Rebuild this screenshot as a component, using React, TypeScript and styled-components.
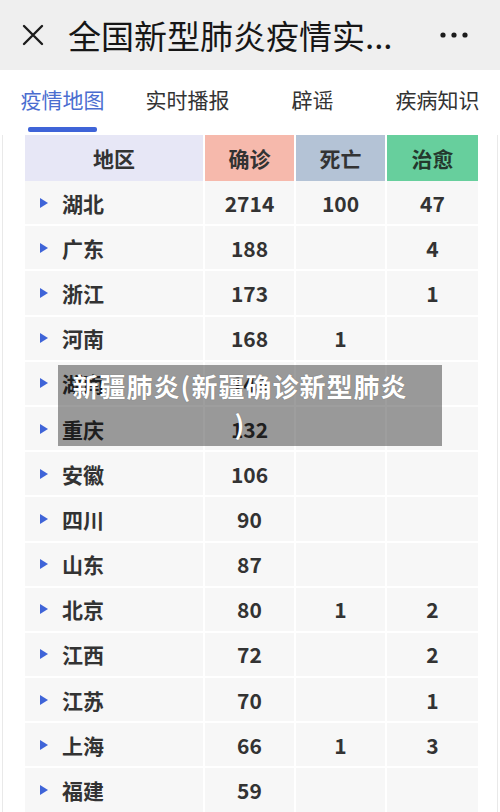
import React from 'react';
import styled, { createGlobalStyle } from 'styled-components';

const GlobalStyle = createGlobalStyle`
  html, body {
    margin: 0;
    padding: 0;
    background: #ffffff;
    font-family: "Noto Sans CJK SC", "Noto Sans", sans-serif;
  }
`;

const Page = styled.div`
  position: relative;
  width: 500px;
  height: 812px;
  overflow: hidden;
  background: #ffffff;
`;

const TopBar = styled.header`
  height: 70px;
  background: #efefef;
  display: flex;
  align-items: center;
  padding: 0 32px 0 22px;
  box-sizing: border-box;
`;

const Title = styled.h1`
  margin: 0 0 0 24px;
  font-size: 33px;
  font-weight: 400;
  color: #161616;
  line-height: 40px;
  white-space: nowrap;
`;

const More = styled.div`
  margin-left: auto;
  display: flex;
`;

const TabBar = styled.nav`
  height: 65px;
  display: grid;
  grid-template-columns: repeat(4, 1fr);
`;

const Tab = styled.div`
  display: flex;
  flex-direction: column;
  align-items: center;
`;

const TabLabel = styled.span<{ $active?: boolean }>`
  margin-top: 14px;
  font-size: 21px;
  line-height: 30px;
  color: ${(p) => (p.$active ? '#4a6dd0' : '#333333')};
  white-space: nowrap;
`;

const Underline = styled.span`
  margin-top: 13px;
  width: 69px;
  height: 5px;
  border-radius: 2px;
  background: #3f64d8;
`;

const Frame = styled.section`
  height: 677px;
  margin: 0 2px;
  border-left: 1px solid #e9e9e9;
  border-right: 1px solid #e9e9e9;
  padding-left: 22px;
`;

const HeadRow = styled.div`
  width: 453px;
  display: grid;
  grid-template-columns: 178px 89px 89px 91px;
  column-gap: 2px;
  height: 46px;
`;

const HeadCell = styled.div<{ $bg: string; $color?: string }>`
  background: ${(p) => p.$bg};
  color: ${(p) => p.$color || '#333333'};
  display: flex;
  align-items: center;
  justify-content: center;
  font-size: 21px;
  font-weight: 700;
`;

const Body = styled.div`
  width: 453px;
  display: grid;
  grid-template-columns: 178px 89px 89px 91px;
  grid-auto-rows: 43.2px;
  gap: 2px;
`;

const Cell = styled.div`
  background: #f7f7f7;
  display: flex;
  align-items: center;
  justify-content: center;
  font-size: 21px;
  font-weight: 700;
  color: #333333;
`;

const RegionCell = styled(Cell)`
  justify-content: flex-start;
  padding-left: 15px;
  gap: 14px;
`;

const Arrow = styled.span`
  width: 0;
  height: 0;
  border-top: 5px solid transparent;
  border-bottom: 5px solid transparent;
  border-left: 8px solid #3f64d8;
`;

const Overlay = styled.div`
  position: absolute;
  left: 58px;
  top: 365px;
  width: 384px;
  height: 81px;
  box-sizing: border-box;
  padding: 2px 30px 3px 10px;
  background: rgba(0, 0, 0, 0.38);
  color: #ffffff;
  font-size: 26px;
  font-weight: 700;
  letter-spacing: 1px;
  line-height: 38px;
  text-align: center;
  white-space: nowrap;
  text-shadow: 0 0 1px rgba(0, 0, 0, 0.4);
`;

type Row = { name: string; confirmed: string; dead: string; cured: string };

const rows: Row[] = [
  { name: '湖北', confirmed: '2714', dead: '100', cured: '47' },
  { name: '广东', confirmed: '188', dead: '', cured: '4' },
  { name: '浙江', confirmed: '173', dead: '', cured: '1' },
  { name: '河南', confirmed: '168', dead: '1', cured: '' },
  { name: '湖南', confirmed: '143', dead: '', cured: '' },
  { name: '重庆', confirmed: '132', dead: '', cured: '' },
  { name: '安徽', confirmed: '106', dead: '', cured: '' },
  { name: '四川', confirmed: '90', dead: '', cured: '' },
  { name: '山东', confirmed: '87', dead: '', cured: '' },
  { name: '北京', confirmed: '80', dead: '1', cured: '2' },
  { name: '江西', confirmed: '72', dead: '', cured: '2' },
  { name: '江苏', confirmed: '70', dead: '', cured: '1' },
  { name: '上海', confirmed: '66', dead: '1', cured: '3' },
  { name: '福建', confirmed: '59', dead: '', cured: '' },
];

const tabs = ['疫情地图', '实时播报', '辟谣', '疾病知识'];

const App: React.FC = () => {
  return (
    <Page>
      <GlobalStyle />
      <TopBar>
        <svg width="22" height="22" viewBox="0 0 22 22">
          <path d="M2 2 L20 20 M20 2 L2 20" stroke="#1c1c1c" strokeWidth="2.4" strokeLinecap="round" />
        </svg>
        <Title>全国新型肺炎疫情实...</Title>
        <More>
          <svg width="28" height="6" viewBox="0 0 28 6">
            <circle cx="3" cy="3" r="2.6" fill="#1c1c1c" />
            <circle cx="14" cy="3" r="2.6" fill="#1c1c1c" />
            <circle cx="25" cy="3" r="2.6" fill="#1c1c1c" />
          </svg>
        </More>
      </TopBar>
      <TabBar>
        {tabs.map((t, i) => (
          <Tab key={t}>
            <TabLabel $active={i === 0}>{t}</TabLabel>
            {i === 0 && <Underline />}
          </Tab>
        ))}
      </TabBar>
      <Frame>
        <HeadRow>
          <HeadCell $bg="#e7e7f6">地区</HeadCell>
          <HeadCell $bg="#f6b9ac">确诊</HeadCell>
          <HeadCell $bg="#b4c3d6">死亡</HeadCell>
          <HeadCell $bg="#67cf9d" $color="#24382d">治愈</HeadCell>
        </HeadRow>
        <Body>
          {rows.map((r) => (
            <React.Fragment key={r.name}>
              <RegionCell>
                <Arrow />
                {r.name}
              </RegionCell>
              <Cell>{r.confirmed}</Cell>
              <Cell>{r.dead}</Cell>
              <Cell>{r.cured}</Cell>
            </React.Fragment>
          ))}
        </Body>
      </Frame>
      <Overlay>
        新疆肺炎(新疆确诊新型肺炎
        <br />)
      </Overlay>
    </Page>
  );
};

export default App;
